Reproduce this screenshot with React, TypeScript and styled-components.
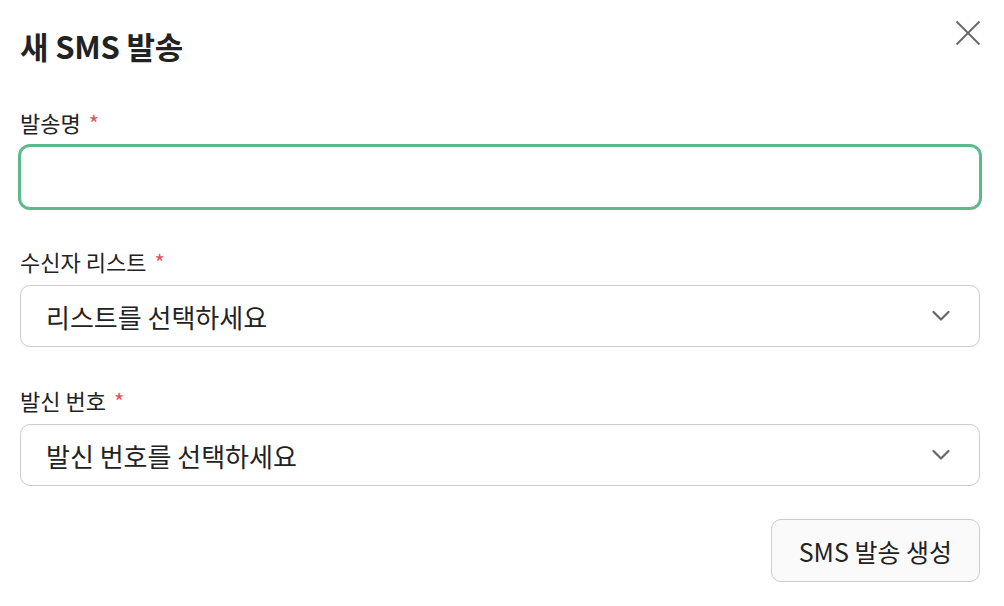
import React from "react";
import styled, { createGlobalStyle } from "styled-components";

const Global = createGlobalStyle`
  html, body { margin: 0; padding: 0; background: #ffffff; }
  body { font-family: "Noto Sans CJK KR", "Noto Sans", sans-serif; color: #222222; }
  * { box-sizing: border-box; }
`;

const Dialog = styled.div`
  width: 1004px;
  padding: 20px 24px 24px 20px;
  display: flex;
  flex-direction: column;
`;

const Header = styled.div`
  display: flex;
  justify-content: space-between;
  align-items: flex-start;
  height: 87px;
`;

const Title = styled.h2`
  margin: 0;
  padding-top: 6px;
  font-size: 31px;
  font-weight: 600;
  line-height: 40px;
  letter-spacing: -0.2px;
  color: #222222;
`;

const CloseButton = styled.button`
  border: none;
  background: none;
  padding: 0;
  margin: 0 -1px 0 0;
  width: 26px;
  height: 26px;
  display: flex;
  align-items: center;
  justify-content: center;
  cursor: pointer;
`;

const Form = styled.div`
  display: flex;
  flex-direction: column;
  gap: 38px;
`;

const Field = styled.div`
  display: flex;
  flex-direction: column;
  gap: 8px;
  width: 960px;
`;

const Label = styled.label`
  font-size: 22px;
  line-height: 31px;
  color: #222222;
`;

const Required = styled.span`
  color: #e0545a;
  margin-left: 8px;
`;

const TextInput = styled.input`
  width: 100%;
  height: 62px;
  border: 1px solid #5cba8a;
  border-radius: 10px;
  box-shadow: 0 0 0 2px #5cba8a;
  outline: none;
  padding: 0 24px;
  font-size: 25px;
  font-family: inherit;
`;

const SelectBox = styled.div`
  width: 100%;
  height: 62px;
  border: 1px solid #cccccc;
  border-radius: 10px;
  display: flex;
  align-items: center;
  justify-content: space-between;
  padding: 0 28px 0 25px;
  font-size: 26px;
  color: #222222;
  background: #ffffff;
`;

const Footer = styled.div`
  display: flex;
  justify-content: flex-end;
  width: 960px;
  margin-top: 33px;
`;

const PrimaryButton = styled.button`
  height: 63px;
  padding: 0 27px;
  border: 1px solid #cccccc;
  border-radius: 10px;
  background: #fafafa;
  font-family: inherit;
  font-size: 25px;
  color: #222222;
  cursor: pointer;
`;

const Chevron = () => (
  <svg width="20" height="12" viewBox="0 0 20 12" fill="none">
    <path d="M2.5 2 L10 9.5 L17.5 2" stroke="#666666" strokeWidth="2.2" strokeLinecap="round" strokeLinejoin="round" />
  </svg>
);

const CloseIcon = () => (
  <svg width="26" height="26" viewBox="0 0 26 26" fill="none">
    <path d="M1.5 1.5 L24.5 24.5 M24.5 1.5 L1.5 24.5" stroke="#666666" strokeWidth="1.8" />
  </svg>
);

export default function App() {
  return (
    <>
      <Global />
      <Dialog>
        <Header>
          <Title>새 SMS 발송</Title>
          <CloseButton aria-label="닫기">
            <CloseIcon />
          </CloseButton>
        </Header>
        <Form>
          <Field>
            <Label>
              발송명<Required>*</Required>
            </Label>
            <TextInput type="text" />
          </Field>
          <Field>
            <Label>
              수신자 리스트<Required>*</Required>
            </Label>
            <SelectBox>
              <span>리스트를 선택하세요</span>
              <Chevron />
            </SelectBox>
          </Field>
          <Field>
            <Label>
              발신 번호<Required>*</Required>
            </Label>
            <SelectBox>
              <span>발신 번호를 선택하세요</span>
              <Chevron />
            </SelectBox>
          </Field>
        </Form>
        <Footer>
          <PrimaryButton>SMS 발송 생성</PrimaryButton>
        </Footer>
      </Dialog>
    </>
  );
}
